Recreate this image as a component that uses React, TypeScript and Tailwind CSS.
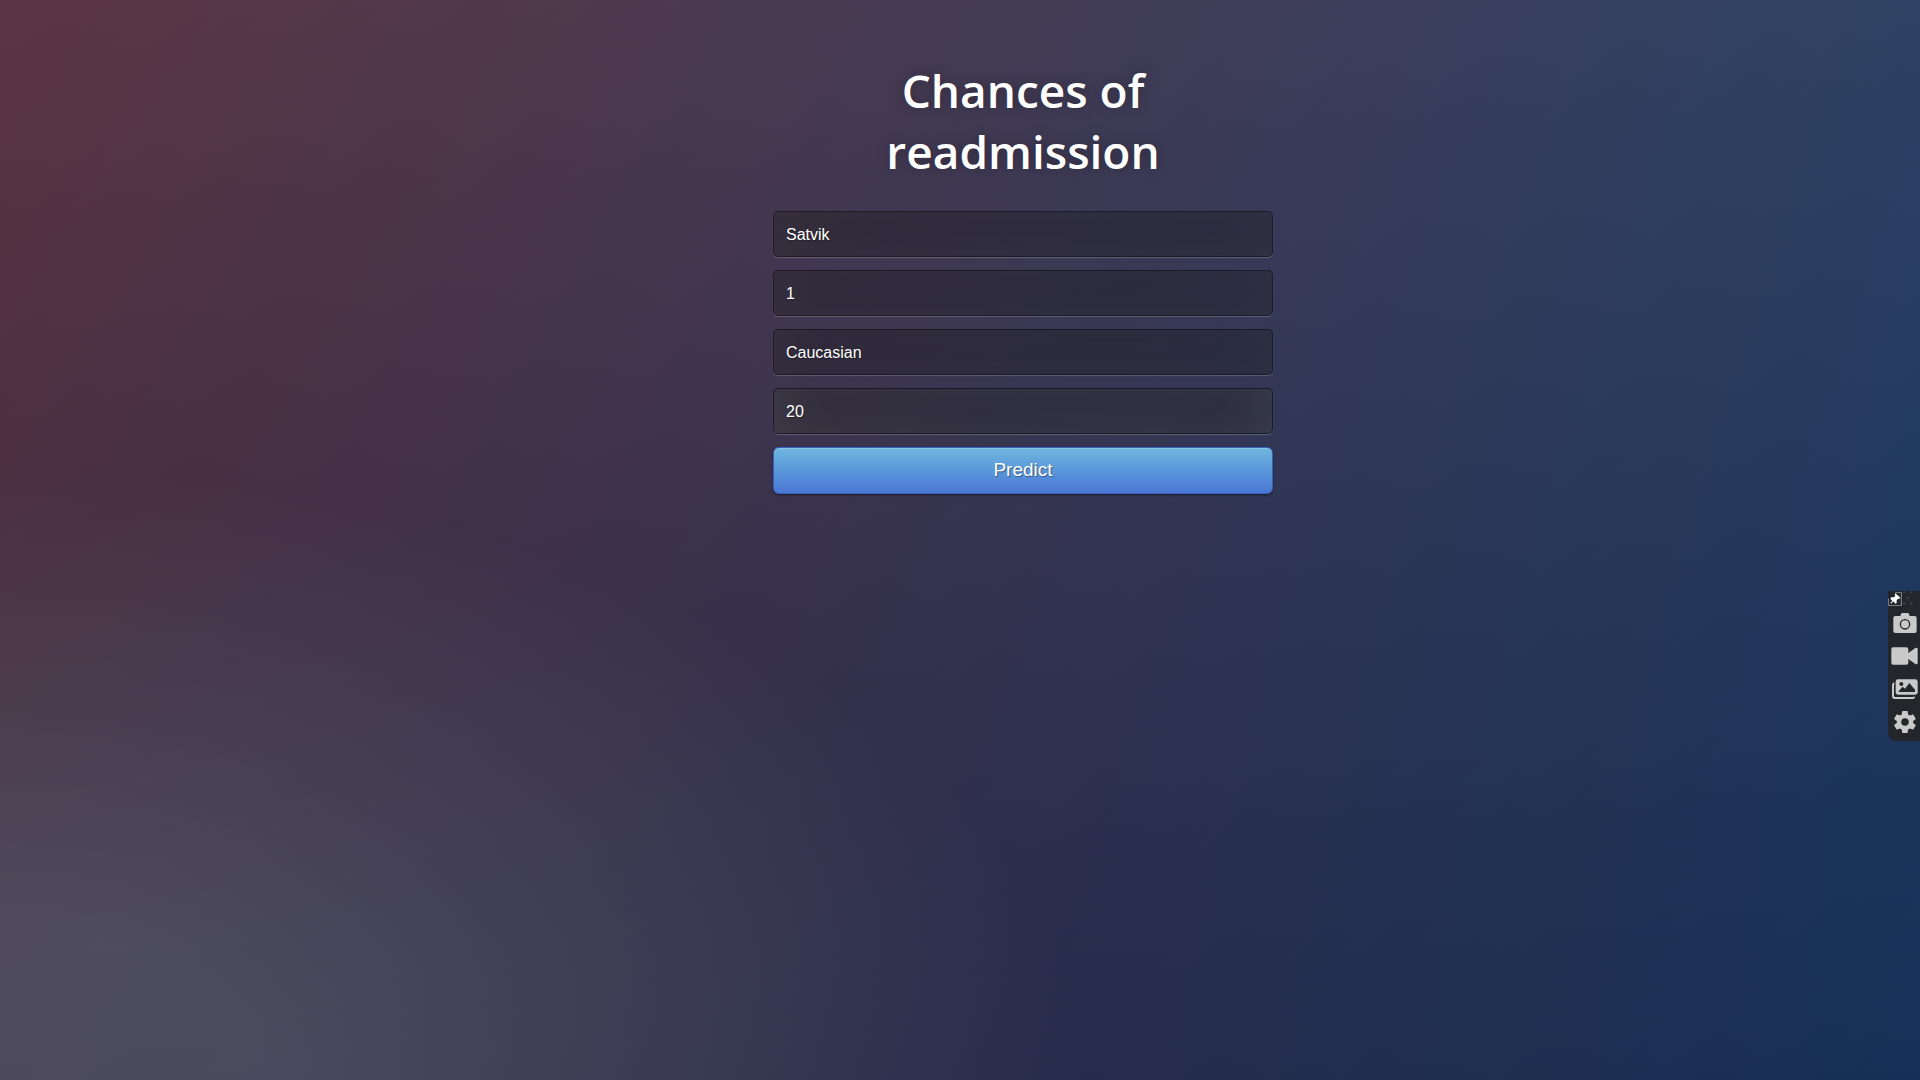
import type { ReactNode } from "react";

const fields = [
  { id: "name", label: "Name", value: "Satvik", focused: false },
  { id: "gender", label: "Gender", value: "1", focused: false },
  { id: "race", label: "Race", value: "Caucasian", focused: false },
  { id: "age", label: "Age", value: "20", focused: true },
];

const plainShadow =
  "shadow-[inset_0_-6px_56px_rgba(100,100,100,0.2),0_1px_1px_rgba(255,255,255,0.2)]";
const focusShadow =
  "shadow-[inset_0_-6px_56px_rgba(100,100,100,0.4),0_1px_1px_rgba(255,255,255,0.2)]";

function ToolButton({ label, children }: { label: string; children: ReactNode }) {
  return (
    <button type="button" aria-label={label} className="flex h-[33px] w-full items-center justify-center text-[#c9c9c9]">
      {children}
    </button>
  );
}

function CaptureToolbar() {
  return (
    <aside
      aria-label="Capture tools"
      className="fixed top-[591px] right-0 flex h-[150px] w-8 flex-col rounded-bl-lg bg-[#23272b]"
    >
      <div className="flex h-[15px] shrink-0">
        <button type="button" aria-label="Pin toolbar">
          <svg width="14" height="14" viewBox="0 0 42 42">
            <path d="M1 20V41H40V1H22" fill="none" stroke="#8b8f94" strokeWidth="3" />
            <path
              d="M22 4L37 17L33 21L30 20L26 25L26 33L22 35L16 28L9 35L7 33L13 26L7 20L10 16L18 16L22 11L20 7Z"
              fill="#fff"
            />
          </svg>
        </button>
        <svg width="12" height="14" viewBox="0 0 36 42" fill="#3b3f43" aria-hidden="true">
          <path d="M3 2h7v5H3zM24 2h7v5h-7zM13 17h8v7h-8zM3 34h7v7H3zM24 34h7v7h-7z" />
        </svg>
      </div>
      <div className="flex flex-col pl-px">
        <ToolButton label="Take screenshot">
          <svg width="24" height="20" viewBox="0 0 72 60" fill="currentColor">
            <path
              fillRule="evenodd"
              d="M24 3Q25 0 28 0H44Q47 0 48 3L50 9H65Q71 9 71 15V53Q71 60 65 60H7Q1 60 1 53V15Q1 9 7 9H22ZM36 18A16 16 0 1 0 36 50A16 16 0 1 0 36 18ZM36 22A12 12 0 1 1 36 46A12 12 0 1 1 36 22Z"
            />
          </svg>
        </ToolButton>
        <ToolButton label="Record video">
          <svg width="27" height="18" viewBox="0 0 81 54" fill="currentColor">
            <path d="M6 1H46Q52 1 52 7V18L73 3Q80 0 80 6V48Q80 54 73 51L52 36V47Q52 53 46 53H6Q1 53 1 47V7Q1 1 6 1Z" />
          </svg>
        </ToolButton>
        <ToolButton label="Open gallery">
          <svg width="26" height="20" viewBox="0 0 78 60">
            <path d="M7 13Q3 14 3 18V50Q3 57 10 57H62Q66 57 67 53" fill="none" stroke="#c9c9c9" strokeWidth="6" />
            <rect x="11" y="1" width="66" height="46" rx="7" fill="#c9c9c9" />
            <path d="M20 37L32 23L39 29L52 12L69 32V39H20Z" fill="#23272b" />
            <circle cx="28" cy="15" r="6" fill="#23272b" />
          </svg>
        </ToolButton>
        <ToolButton label="Settings">
          <svg width="22" height="22" viewBox="2 2 20 20" fill="currentColor">
            <path d="M19.4 13a7.5 7.5 0 0 0 0-2l2.1-1.6a.5.5 0 0 0 .1-.7l-2-3.4a.5.5 0 0 0-.6-.2l-2.5 1a7.3 7.3 0 0 0-1.7-1l-.4-2.6a.5.5 0 0 0-.5-.5h-4a.5.5 0 0 0-.5.5l-.3 2.6a7.3 7.3 0 0 0-1.7 1l-2.5-1a.5.5 0 0 0-.6.2l-2 3.4a.5.5 0 0 0 .1.7L4.6 11a7.5 7.5 0 0 0 0 2l-2.2 1.6a.5.5 0 0 0-.1.7l2 3.4a.5.5 0 0 0 .6.2l2.5-1a7.3 7.3 0 0 0 1.7 1l.3 2.6a.5.5 0 0 0 .5.5h4a.5.5 0 0 0 .5-.5l.4-2.6a7.3 7.3 0 0 0 1.7-1l2.5 1a.5.5 0 0 0 .6-.2l2-3.4a.5.5 0 0 0-.1-.7zM12 15.4a3.4 3.4 0 1 1 0-6.8 3.4 3.4 0 0 1 0 6.8z" />
          </svg>
        </ToolButton>
      </div>
    </aside>
  );
}

export default function App() {
  return (
    <div className="min-h-screen overflow-hidden bg-[radial-gradient(ellipse_farthest-corner_at_0%_100%,rgba(104,128,138,0.4)_10%,rgba(138,114,76,0)_40%),linear-gradient(to_bottom,rgba(57,173,219,0.25)_0%,rgba(42,60,87,0.4)_100%),linear-gradient(135deg,#670d10_0%,#092756_100%)] font-['Open_Sans',sans-serif]">
      <main className="ml-[calc(50%-187px)] w-[500px] pt-[60px]">
        <h1 className="px-24 text-center text-[46px] leading-[61px] font-semibold text-white [text-shadow:0_0_12px_rgba(0,0,0,0.3)]">
          Chances of readmission
        </h1>
        <form className="mt-[29px] flex flex-col gap-[13px]" onSubmit={(e) => e.preventDefault()}>
          {fields.map((f) => (
            <input
              key={f.id}
              id={f.id}
              name={f.id}
              aria-label={f.label}
              defaultValue={f.value}
              className={`h-[46px] w-full rounded-[5px] border border-black/30 bg-black/30 px-3 pt-[2px] font-['Liberation_Sans',sans-serif] text-[16px] text-white outline-none [text-shadow:1px_1px_1px_rgba(0,0,0,0.3)] ${f.focused ? focusShadow : plainShadow}`}
            />
          ))}
          <button
            type="submit"
            className="h-[47px] w-full rounded-[6px] border border-[#3762bc] bg-linear-to-b from-[#6eb6de] to-[#4a77d4] pb-px font-['Liberation_Sans',sans-serif] text-[19px] text-white shadow-[inset_0_1px_0_rgba(255,255,255,0.2),0_1px_2px_rgba(0,0,0,0.5)] [text-shadow:1px_1px_1px_rgba(0,0,0,0.4)]"
          >
            Predict
          </button>
        </form>
      </main>
      <CaptureToolbar />
    </div>
  );
}
